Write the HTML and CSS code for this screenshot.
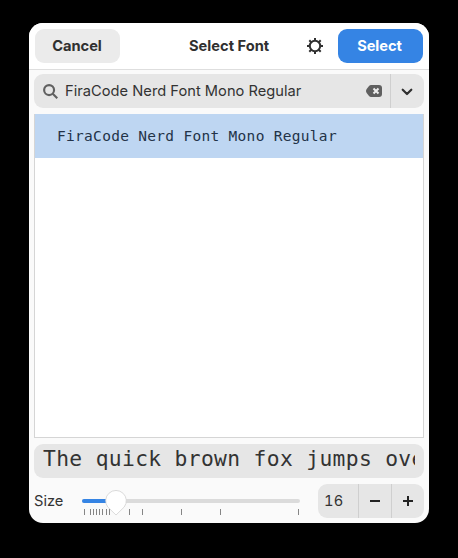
FILE: index.html
```html
<!DOCTYPE html>
<html lang="en">
<head>
<meta charset="utf-8">
<title>Select Font</title>
<link rel="stylesheet" href="styles.css">
</head>
<body>
<main class="window">
  <header class="header">
    <button class="button cancel">Cancel</button>
    <h1 class="title">Select Font</h1>
    <svg class="gear" viewBox="0 0 16 16"><circle cx="8" cy="8" r="5.2"/><path d="M8 0v2.500M8 13.500v2.500M0 8h2.500M13.500 8h2.500M2.300 2.300l1.900 1.900M11.800 11.800l1.900 1.900M13.700 2.300l-1.900 1.900M4.200 11.800l-1.900 1.900"/></svg>
    <button class="button select">Select</button>
  </header>
  <section class="content">
    <div class="search">
      <svg class="lens" viewBox="0 0 16 16"><circle cx="6.5" cy="6.5" r="5.3"/><path d="M10.4 10.4l4.8 4.8"/></svg>
      <span class="query">FiraCode Nerd Font Mono Regular</span>
      <svg class="clear" viewBox="0 0 16 12"><path class="clear-shape" d="M5 0H13a3 3 0 0 1 3 3v6a3 3 0 0 1-3 3H5Q4 12 3 11L.7 8Q-.7 6 .7 4L3 1Q4 0 5 0z"/><path class="clear-cross" d="M7.500 3.500l5 5M12.500 3.500l-5 5"/></svg>
      <span class="dropdown"><svg class="chevron" viewBox="0 0 12 8"><path d="M1.700 1.700L6 6l4.300-4.300"/></svg></span>
    </div>
    <div class="list"><div class="row">FiraCode Nerd Font Mono Regular</div></div>
    <div class="preview"><span class="sample">The quick brown fox jumps over</span></div>
    <div class="footer">
      <span class="size">Size</span>
      <svg class="slider" viewBox="0 0 222 34">
        <rect class="track" x="2" y="15" width="218" height="4" rx="2"/>
        <rect class="fill" x="2" y="15" width="34" height="4" rx="2"/>
        <path class="ticks" d="M4.500 25v6M10.500 25v6M13.500 25v6M16.500 25v6M19.500 25v6M22.500 25v6M26.500 25v6M29.500 25v6M49.500 25v6M62.500 25v6M101.500 25v6M140.500 25v6M218.500 25v6"/>
        <path class="thumb" d="M27.800 23A10.300 10.300 0 1 1 44.200 23L36 31z"/>
      </svg>
      <div class="spin">
        <span class="value">16</span>
        <span class="step"><svg class="sign" viewBox="0 0 10 10"><path d="M0 5h10"/></svg></span>
        <span class="step"><svg class="sign" viewBox="0 0 10 10"><path d="M0 5h10M5 0v10"/></svg></span>
      </div>
    </div>
  </section>
</main>
</body>
</html>
```
FILE: styles.css
```css
* { box-sizing: border-box; }
body { margin: 0; background: #000; color: #333; font: 14.67px/20px Inter, "Noto Sans", sans-serif; }
svg { display: block; flex: none; fill: none; }
.window { width: 400px; height: 500px; margin: 23px 29px 35px; overflow: hidden; border-radius: 14px; background: #fafafa; }
.header { display: flex; align-items: center; height: 47px; padding: 0 6px; border-bottom: 1px solid #dedede; background: #fff; }
.button { width: 85px; height: 34px; padding: 0 1px 0 0; border: 0; border-radius: 9px; color: #303030; background: #ebebeb; font: 700 14.67px/20px Inter, sans-serif; letter-spacing: -.05px; }
.button.select { padding-right: 2px; color: #fff; background: #3584e4; }
.title { width: 80px; margin: 0 0 0 69px; white-space: nowrap; font-size: 14.67px; line-height: 20px; font-weight: 700; letter-spacing: 0; color: #303030; }
.gear { width: 16px; height: 16px; margin: 0 15px 0 38px; stroke: #303030; stroke-width: 2; }
.content { padding: 4px 5px 5px; }
.search { display: flex; align-items: center; height: 34px; padding-left: 9px; border-radius: 9px; background: #e6e6e6; }
.lens { width: 15px; height: 15px; stroke: #606060; stroke-width: 2.3; }
.query { width: 293px; margin: 0 8px 0 7px; white-space: nowrap; letter-spacing: .02px; }
.clear { width: 16px; height: 12px; }
.clear-shape { fill: #606060; }
.clear-cross { stroke: #eee; stroke-width: 2; }
.dropdown { display: grid; place-items: center; width: 34px; height: 34px; margin-left: auto; padding: 2px 2px 0 0; border-left: 1px solid #cfcfcf; }
.chevron { width: 12px; height: 8px; stroke: #303030; stroke-width: 2.2; stroke-linecap: round; stroke-linejoin: round; }
.list { height: 324px; margin-top: 6px; border: 1px solid #d5d5d5; background: #fff; }
.row { height: 44px; margin: -1px 0 0; padding-left: 22px; color: #233348; background: #bed6f2; font: 14.5px/45px "DejaVu Sans Mono", monospace; letter-spacing: .3px; white-space: nowrap; }
.preview { height: 34px; margin-top: 6px; padding: 0 9px; border-radius: 9px; background: #e6e6e6; }
.sample { display: block; overflow: hidden; height: 34px; font: 21.3px/30px "DejaVu Sans Mono", monospace; letter-spacing: .34px; white-space: nowrap; }
.footer { display: flex; align-items: center; height: 34px; margin-top: 6px; }
.size { width: 46px; }
.slider { width: 222px; height: 34px; overflow: visible; }
.track { fill: #dbdbdb; }
.fill { fill: #3584e4; }
.ticks { stroke: #858585; }
.thumb { fill: #fff; stroke: #d2d2d2; stroke-width: .8; stroke-linejoin: round; }
.spin { display: flex; width: 106px; height: 34px; margin-left: auto; border-radius: 9px; overflow: hidden; background: #e6e6e6; }
.value { width: 40px; padding-left: 6px; line-height: 34px; font-feature-settings: "tnum"; letter-spacing: .2px; }
.step { display: grid; place-items: center; width: 33px; border-left: 1px solid #cfcfcf; }
.sign { width: 10px; height: 10px; stroke: #222; stroke-width: 2; }
```
